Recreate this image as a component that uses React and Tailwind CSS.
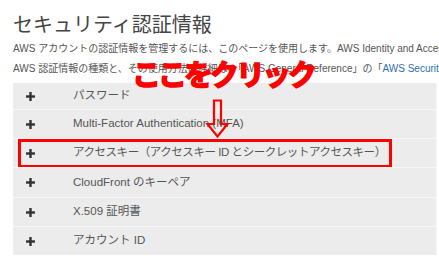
import React from "react";

const rows = [
  { label: "パスワード", h: "h-[26px]" },
  { label: "Multi-Factor Authentication (MFA)", h: "h-[29px]" },
  { label: "アクセスキー（アクセスキー ID とシークレットアクセスキー）", h: "h-[29px]", boxed: true },
  { label: "CloudFront のキーペア", h: "h-[30px]" },
  { label: "X.509 証明書", h: "h-[29px]" },
  { label: "アカウント ID", h: "h-[29px]" },
];

const font = { fontFamily: '"Liberation Sans", "Noto Sans CJK JP", sans-serif' };

const Plus = () => (
  <svg width="9" height="9" viewBox="0 0 9 9" className="shrink-0">
    <rect x="3.3" y="0" width="2.4" height="9" fill="#333" />
    <rect x="0" y="3.3" width="9" height="2.4" fill="#333" />
  </svg>
);

export default function App() {
  return (
    <div
      className="relative w-[439px] h-[273px] overflow-hidden bg-white pl-[13px] pt-[12px]"
      style={font}
    >
      <h1 className="text-[20px] leading-[27px] text-[#444] font-normal whitespace-nowrap">
        セキュリティ認証情報
      </h1>

      <div className="text-[10px] leading-[20px] text-[#555] whitespace-nowrap">
        <p>
          AWS アカウントの認証情報を管理するには、このページを使用します。AWS Identity and Access Management
        </p>
        <p>
          AWS 認証情報の種類と、その使用方法の詳細は、「AWS General Reference」の「
          <span className="text-[#2f6fb0]">AWS Security Credentials</span>」
        </p>
      </div>

      <div className="mt-[4px] w-[424px] bg-[#ececec] border-r border-[#f7f7f7]">
        {rows.map((r, i) => (
          <div
            key={r.label}
            className={`relative flex items-center ${r.h} ${
              i > 0 ? "border-t border-[#f6f6f6]" : ""
            }`}
          >
            <div className="w-[60px] pl-[13px] flex items-center">
              <Plus />
            </div>
            <span
              className={`text-[11.5px] text-[#555] whitespace-nowrap ${
                r.boxed ? "tracking-[-0.45px]" : ""
              }`}
            >
              {r.label}
            </span>
            {r.boxed && (
              <div className="absolute left-[5px] top-0 w-[374px] h-[29px] border-[3px] border-[#ff0000]" />
            )}
          </div>
        ))}
      </div>

      {/* annotation */}
      <div
        className="absolute left-[132px] top-[54px] text-[29px] leading-[38px] font-bold text-[#ff0000] tracking-[-3px] whitespace-nowrap [-webkit-text-stroke:1.6px_#ff0000]"
        style={{ fontFamily: '"Noto Sans CJK JP", sans-serif' }}
      >
        ここをクリック
      </div>
      <svg
        className="absolute left-[205px] top-[99px]"
        width="26"
        height="40"
        viewBox="0 0 26 40"
      >
        <path
          d="M9 1.5 H16 V25 H22.5 L12.5 37.5 L2.5 25 H9 Z"
          fill="none"
          stroke="#ff0000"
          strokeWidth="2.2"
          strokeLinejoin="miter"
        />
      </svg>
    </div>
  );
}
